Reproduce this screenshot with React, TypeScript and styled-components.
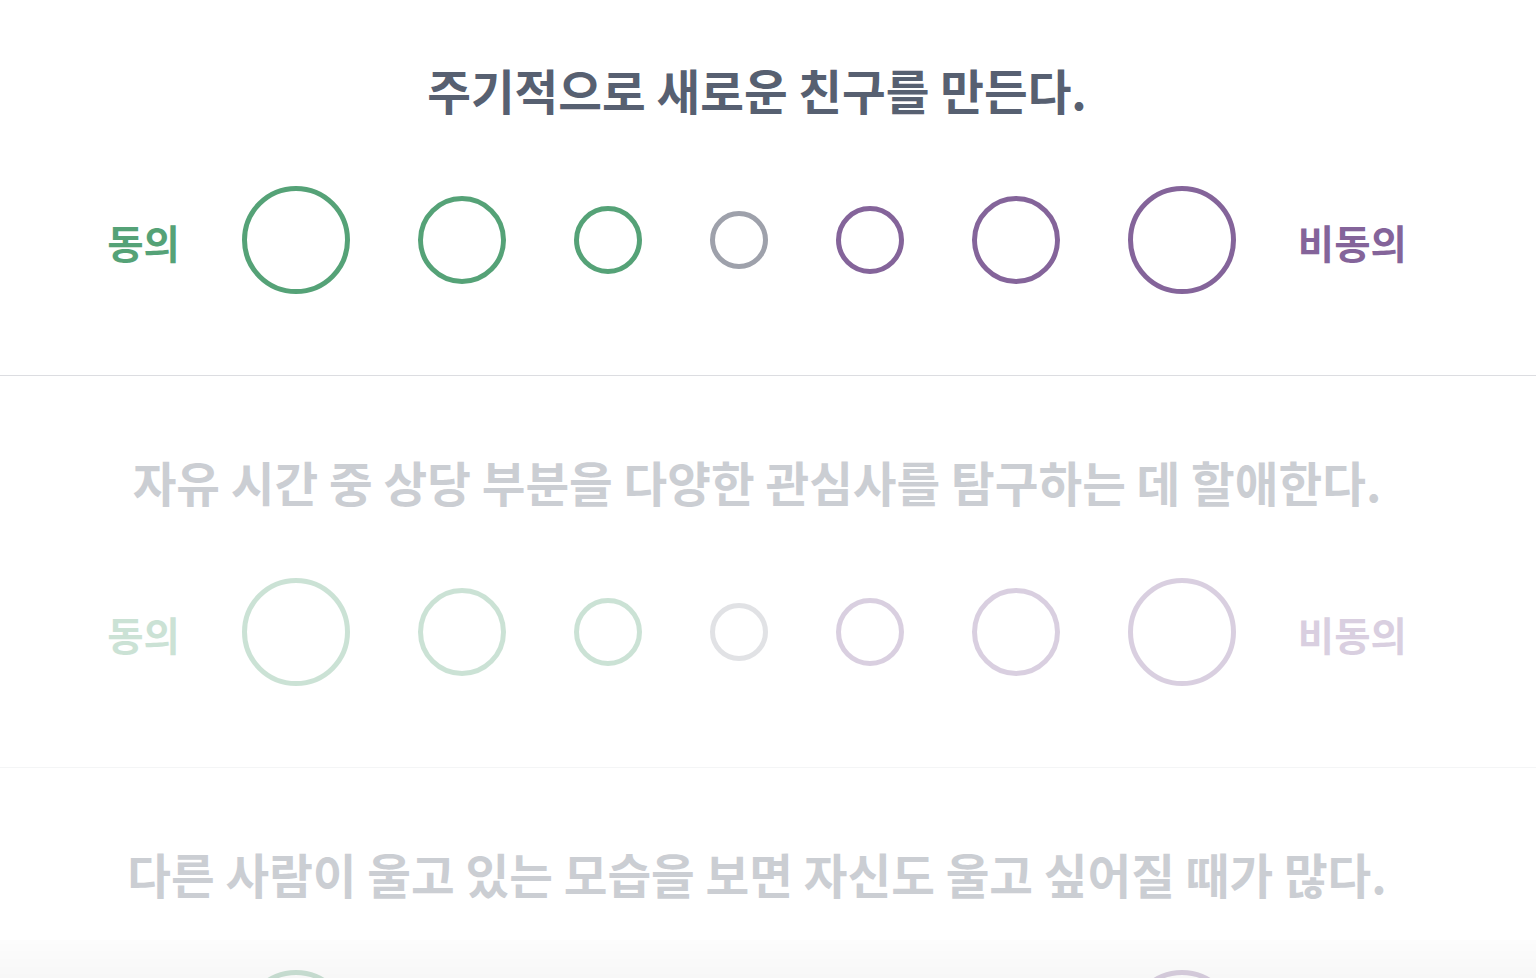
import { FC } from "react";
import styled, { createGlobalStyle } from "styled-components";

const GREEN = "#55a277";
const PURPLE = "#84649a";
const GRAY = "#9ea1ab";

const questions = [
  "주기적으로 새로운 친구를 만든다.",
  "자유 시간 중 상당 부분을 다양한 관심사를 탐구하는 데 할애한다.",
  "다른 사람이 울고 있는 모습을 보면 자신도 울고 싶어질 때가 많다.",
];

const options = [
  { size: 108, color: GREEN },
  { size: 88, color: GREEN },
  { size: 68, color: GREEN },
  { size: 58, color: GRAY },
  { size: 68, color: PURPLE },
  { size: 88, color: PURPLE },
  { size: 108, color: PURPLE },
];

type QuestionProps = { text: string; active: boolean };

const Question: FC<QuestionProps> = ({ text, active }) => (
  <Section $active={active}>
    <Title>{text}</Title>
    <Row>
      <Label $color={GREEN}>동의</Label>
      {options.map((o, i) => (
        <Circle key={i} $size={o.size} $color={o.color} aria-label={`option ${i + 1}`} />
      ))}
      <Label $color={PURPLE}>비동의</Label>
    </Row>
  </Section>
);

const App: FC = () => (
  <>
    <GlobalStyle />
    <List>
      {questions.map((q, i) => (
        <Question key={i} text={q} active={i === 0} />
      ))}
    </List>
    <Fade />
  </>
);

const GlobalStyle = createGlobalStyle`
  html, body {
    margin: 0;
    padding: 0;
    overflow: hidden;
    background: #ffffff;
  }
  body {
    font-family: "Noto Sans CJK KR", "Noto Sans", sans-serif;
  }
`;

const List = styled.div`
  margin-top: -16px;
`;

const Section = styled.section<{ $active: boolean }>`
  padding: 78px 22px 81px 0;
  border-bottom: 1px solid #dcdde1;
  opacity: ${p => (p.$active ? 1 : 0.3)};
`;

const Title = styled.h2`
  margin: 0 0 68px;
  text-align: center;
  font-size: 47.5px;
  line-height: 56px;
  font-weight: 700;
  color: #576071;
`;

const Row = styled.div`
  display: flex;
  justify-content: center;
  align-items: center;
  height: 108px;
`;

const Label = styled.span<{ $color: string }>`
  font-size: 39.5px;
  line-height: 48px;
  font-weight: 700;
  color: ${p => p.$color};
  margin: 4px 28px 0;
`;

const Circle = styled.button<{ $size: number; $color: string }>`
  box-sizing: border-box;
  width: ${p => p.$size}px;
  height: ${p => p.$size}px;
  margin: 0 34px;
  padding: 0;
  border-radius: 50%;
  border: 5px solid ${p => p.$color};
  background: transparent;
  cursor: pointer;
  flex: none;
`;

const Fade = styled.div`
  position: fixed;
  left: 0;
  right: 0;
  bottom: 0;
  height: 38px;
  background: linear-gradient(rgba(0, 0, 0, 0.012), rgba(0, 0, 0, 0.03));
  pointer-events: none;
`;

export default App;
